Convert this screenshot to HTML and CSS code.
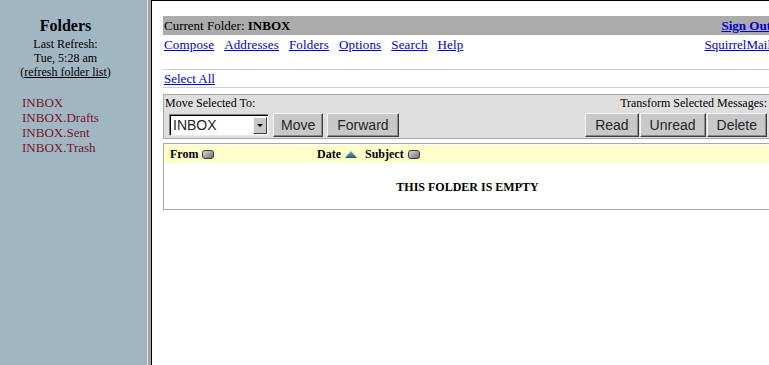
FILE: index.html
```html
<!DOCTYPE html>
<html lang="en">
<head>
    <meta charset="UTF-8">
    <title>SquirrelMail</title>
    <link rel="stylesheet" href="styles.css">
</head>
<body>
    <div class="frameset">
        <!-- left frame: folder list -->
        <div class="left-pane">
            <div class="folders-title">Folders</div>
            <div class="refresh">
                Last Refresh:<br>
                Tue, 5:28 am<br>
                (<a href="#">refresh folder list</a>)
            </div>
            <ul class="folder-list">
                <li><a href="#">INBOX</a></li>
                <li><a href="#">INBOX.Drafts</a></li>
                <li><a href="#">INBOX.Sent</a></li>
                <li><a href="#">INBOX.Trash</a></li>
            </ul>
        </div>

        <div class="divider"></div>

        <!-- right frame: message list -->
        <div class="right-pane">
            <div class="content">
                <div class="title-bar">
                    <span>Current Folder: <b>INBOX</b></span>
                    <a href="#" class="sign-out">Sign Out</a>
                </div>
                <div class="menu-row">
                    <div class="menu-links">
                        <a href="#">Compose</a>
                        <a href="#">Addresses</a>
                        <a href="#">Folders</a>
                        <a href="#">Options</a>
                        <a href="#">Search</a>
                        <a href="#">Help</a>
                    </div>
                    <a href="#">SquirrelMail</a>
                </div>

                <div class="select-row">
                    <a href="#">Select All</a>
                </div>

                <div class="action-box">
                    <div class="action-col">
                        <div class="action-label">Move Selected To:</div>
                        <div class="controls">
                            <div class="fake-select">
                                <span>INBOX</span>
                                <span class="select-arrow"></span>
                            </div>
                            <button class="btn btn-narrow">Move</button>
                            <button class="btn">Forward</button>
                        </div>
                    </div>
                    <div class="action-col right">
                        <div class="action-label">Transform Selected Messages:</div>
                        <div class="controls tight">
                            <button class="btn">Read</button>
                            <button class="btn">Unread</button>
                            <button class="btn">Delete</button>
                        </div>
                    </div>
                </div>

                <div class="message-box">
                    <div class="list-header">
                        <div class="col-from">From
                            <svg class="sort-icon" width="12" height="9" viewBox="0 0 12 9"><defs><linearGradient id="sg" x1="0" y1="0" x2="1" y2="1"><stop offset="0" stop-color="#e0e0e0"/><stop offset="1" stop-color="#6a6a6a"/></linearGradient></defs><rect x="0.5" y="0.5" width="11" height="8" rx="2.5" fill="url(#sg)" stroke="#3a3a3a"/></svg>
                        </div>
                        <div class="col-date">Date
                            <svg class="sort-up" width="12" height="7" viewBox="0 0 12 7"><defs><linearGradient id="tg" x1="0" y1="0" x2="0" y2="1"><stop offset="0" stop-color="#6fa6c2"/><stop offset="1" stop-color="#245a78"/></linearGradient></defs><polygon points="6,0 12,7 0,7" fill="url(#tg)"/></svg>
                        </div>
                        <div class="col-subject">Subject
                            <svg class="sort-icon" width="12" height="9" viewBox="0 0 12 9"><rect x="0.5" y="0.5" width="11" height="8" rx="2.5" fill="url(#sg)" stroke="#3a3a3a"/></svg>
                        </div>
                    </div>
                    <div class="empty">THIS FOLDER IS EMPTY</div>
                </div>
            </div>
        </div>
    </div>
</body>
</html>
```

FILE: styles.css
```css
body {
    margin: 0;
    height: 365px;
    overflow: hidden;
    font-family: "Liberation Serif", "Times New Roman", serif;
    color: #000;
    background: #fff;
}
a {
    color: #0000cc;
}
.frameset {
    display: flex;
    height: 365px;
}
/* left frame */
.left-pane {
    width: 131px;
    padding: 17px 16px 0 0;
    background-color: #a0b7c3;
    text-align: center;
}
.folders-title {
    font-size: 16px;
    line-height: 18px;
    font-weight: bold;
}
.refresh {
    margin-top: 2px;
    font-size: 12px;
    line-height: 14px;
}
.refresh a {
    color: #000;
}
.folder-list {
    list-style: none;
    margin: 16px 0 0 0;
    padding: 0 0 0 22px;
    text-align: left;
    font-size: 13px;
    line-height: 15px;
}
.folder-list a {
    color: #7a1426;
    text-decoration: none;
}
.divider {
    width: 3px;
    background-color: #a4a4a4;
    border-left: 1px solid #e4e4e4;
    border-right: 1px solid #000;
}
/* right frame */
.right-pane {
    flex: 1;
    border-top: 1px solid #000;
    padding: 15px 0 0 11px;
    overflow: hidden;
}
.content {
    width: 609px;
    font-size: 13px;
}
.title-bar {
    display: flex;
    justify-content: space-between;
    height: 19px;
    line-height: 19px;
    padding: 0 1px;
    background-color: #ababab;
}
.sign-out {
    font-weight: bold;
}
.menu-row {
    display: flex;
    justify-content: space-between;
    margin-top: 2px;
    padding: 0 1px;
    line-height: 16px;
}
.menu-links {
    display: flex;
    gap: 10px;
    letter-spacing: 0.15px;
}
.select-row {
    margin-top: 16px;
    border-top: 1px solid #cfcfcf;
    border-bottom: 1px solid #cfcfcf;
    line-height: 17px;
    padding: 0 1px;
}
.action-box {
    display: flex;
    justify-content: space-between;
    margin-top: 6px;
    padding: 1px 4px 1px 1px;
    border: 1px solid #a8a8a8;
    background-color: #dedede;
}
.action-label {
    font-size: 12px;
    line-height: 14px;
}
.action-col.right {
    text-align: right;
}
.controls {
    display: flex;
    gap: 4px;
    margin-top: 3px;
    padding-left: 4px;
}
.controls.tight {
    gap: 1px;
    justify-content: flex-end;
}
.btn {
    height: 24px;
    padding: 0 9px;
    font-family: "Liberation Sans", Arial, sans-serif;
    font-size: 14px;
    color: #262626;
    background-color: #c8c8c8;
    border: 1px solid;
    border-color: #f4f4f4 #404040 #404040 #f4f4f4;
    box-shadow: inset -1px -1px 0 #888;
}
.btn-narrow {
    padding: 0 7px;
}
.fake-select {
    display: flex;
    align-items: center;
    justify-content: space-between;
    box-sizing: border-box;
    width: 100px;
    height: 22px;
    margin-top: 1px;
    padding: 0 1px 0 3px;
    font-family: "Liberation Sans", Arial, sans-serif;
    font-size: 14px;
    color: #222;
    background: #fff;
    border: 1px solid;
    border-color: #808080 #e8e8e8 #e8e8e8 #808080;
    box-shadow: inset 1px 1px 0 #000;
}
.select-arrow {
    position: relative;
    box-sizing: border-box;
    width: 14px;
    height: 17px;
    margin-top: 1px;
    background-color: #c8c8c8;
    border: 1px solid;
    border-color: #f4f4f4 #404040 #404040 #f4f4f4;
}
.select-arrow::after {
    content: "";
    position: absolute;
    left: 3px;
    top: 6px;
    border-left: 3px solid transparent;
    border-right: 3px solid transparent;
    border-top: 3px solid #000;
}
.message-box {
    margin-top: 4px;
    border: 1px solid #a8a8a8;
}
.list-header {
    display: grid;
    grid-template-columns: 150px 48px 1fr;
    margin-top: 1px;
    height: 18px;
    line-height: 18px;
    font-size: 12px;
    font-weight: bold;
    background-color: #ffffcc;
}
.col-from {
    padding-left: 6px;
}
.col-date,
.col-subject {
    padding-left: 3px;
}
.sort-icon {
    margin-left: 1px;
    vertical-align: -1px;
}
.sort-up {
    margin-left: 1px;
    vertical-align: 0;
}
.empty {
    padding: 17px 0 15px;
    line-height: 14px;
    font-size: 12px;
    font-weight: bold;
    text-align: center;
}
```
